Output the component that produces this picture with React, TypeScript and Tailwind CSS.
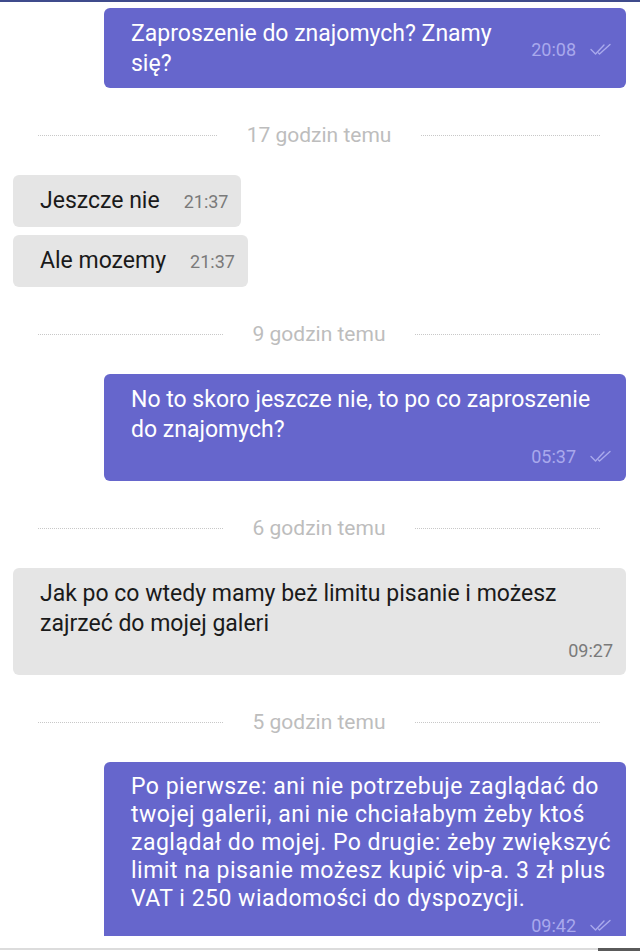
import React from "react";

function DoubleCheck() {
  return (
    <svg width="22" height="13" viewBox="0 0 22 13" fill="none" className="shrink-0">
      <path d="M1 6.5 L5.5 11 L14 2" stroke="#a9a9ec" strokeWidth="1.4" strokeLinecap="round" strokeLinejoin="round" />
      <path d="M8.5 10 L9.5 11 L20 1.5" stroke="#a9a9ec" strokeWidth="1.4" strokeLinecap="round" strokeLinejoin="round" />
    </svg>
  );
}

function Divider({ label }: { label: string }) {
  return (
    <div className="flex items-center pl-[38px] pr-[40px] mt-[36px] mb-[29px] h-[22px]">
      <div className="flex-1 border-t border-dotted border-[#c8c8c8]" />
      <span className="mx-[30px] text-[21px] leading-[22px] text-[#bdbdbd]">{label}</span>
      <div className="flex-1 border-t border-dotted border-[#c8c8c8]" />
    </div>
  );
}

function Sent({ lines, time, wide }: { lines: string[]; time: string; wide?: boolean }) {
  return (
    <div className="ml-[104px] mr-[14px] rounded-[6px] bg-[#6666cc] pl-[27px] pr-[14px] pt-[11px] pb-[13px] text-white">
      <div className={wide ? "text-[23px] leading-[28px] tracking-[0.5px]" : "text-[23px] leading-[29.5px]"}>
        {lines.map((l, i) => (
          <div key={i} className="whitespace-nowrap">{l}</div>
        ))}
      </div>
      <div className="flex justify-end items-center gap-[14px] h-[24px]">
        <span className="text-[18px] text-[#a9a9ec]">{time}</span>
        <DoubleCheck />
      </div>
    </div>
  );
}

function Received({ lines, time, full }: { lines: string[]; time: string; full?: boolean }) {
  return (
    <div className={`ml-[13px] rounded-[6px] bg-[#e5e5e5] pl-[27px] pr-[13px] ${full ? "mr-[14px] pt-[11px] pb-[13px]" : "self-start"}`}>
      {full ? (
        <>
          <div className="text-[23px] leading-[29.5px] text-[#1a1a1a]">
            {lines.map((l, i) => (
              <div key={i} className="whitespace-nowrap">{l}</div>
            ))}
          </div>
          <div className="flex justify-end h-[24px] items-center">
            <span className="text-[18px] text-[#7a7a7a]">{time}</span>
          </div>
        </>
      ) : (
        <div className="flex items-center h-[52px] gap-[24px]">
          <span className="text-[23px] text-[#1a1a1a]">{lines[0]}</span>
          <span className="text-[18px] text-[#7a7a7a]">{time}</span>
        </div>
      )}
    </div>
  );
}

export default function App() {
  return (
    <div className="w-[640px] h-[951px] bg-white flex flex-col overflow-hidden font-['Roboto','Liberation_Sans',sans-serif]">
      <div className="h-[2px] bg-[#3f4b8c] shrink-0" />
      <div className="h-[934px] overflow-hidden flex flex-col pt-[6px]">
        <div className="ml-[104px] mr-[14px] rounded-[6px] bg-[#6666cc] pl-[27px] pr-[14px] pt-[11px] pb-[9px] text-white flex items-center">
          <div className="text-[23px] leading-[30px] w-[375px]">
            <div className="whitespace-nowrap">Zaproszenie do znajomych? Znamy</div>
            <div>się?</div>
          </div>
          <div className="flex-1 flex justify-end items-center gap-[14px]">
            <span className="text-[18px] text-[#a9a9ec]">20:08</span>
            <DoubleCheck />
          </div>
        </div>

        <Divider label="17 godzin temu" />
        <div className="flex flex-col gap-[8px]">
          <Received lines={["Jeszcze nie"]} time="21:37" />
          <Received lines={["Ale mozemy"]} time="21:37" />
        </div>

        <Divider label="9 godzin temu" />
        <Sent lines={["No to skoro jeszcze nie, to po co zaproszenie", "do znajomych?"]} time="05:37" />

        <Divider label="6 godzin temu" />
        <Received
          full
          lines={["Jak po co wtedy mamy beż limitu pisanie i możesz", "zajrzeć do mojej galeri"]}
          time="09:27"
        />

        <Divider label="5 godzin temu" />
        <Sent
          wide
          lines={[
            "Po pierwsze: ani nie potrzebuje zaglądać do",
            "twojej galerii, ani nie chciałabym żeby ktoś",
            "zaglądał do mojej. Po drugie: żeby zwiększyć",
            "limit na pisanie możesz kupić vip-a. 3 zł plus",
            "VAT i 250 wiadomości do dyspozycji.",
          ]}
          time="09:42"
        />
      </div>
      <div className="flex-1 bg-white flex flex-col justify-end">
        <div className="flex items-end h-[3px]">
          <div className="flex-1 h-[2px] bg-[#dcdcdc] self-start" />
          <div className="w-[42px] h-[3px] bg-[#5a5a5a]" />
        </div>
      </div>
    </div>
  );
}
